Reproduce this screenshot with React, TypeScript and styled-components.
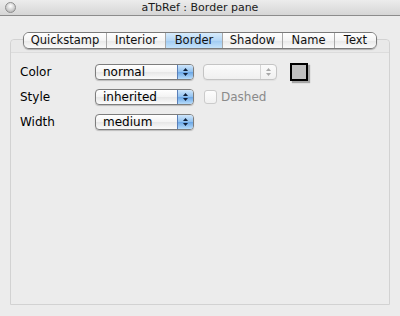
import styled, { createGlobalStyle } from 'styled-components';

const GlobalStyle = createGlobalStyle`
  html, body {
    margin: 0;
    padding: 0;
    background: #ececec;
  }
  body {
    font-family: "Lucida Grande", "DejaVu Sans", sans-serif;
    font-size: 12px;
    color: #000;
  }
`;

const Window = styled.div`
  width: 400px;
  height: 316px;
  display: flex;
  flex-direction: column;
  background: #ececec;
  overflow: hidden;
`;

const TitleBar = styled.div`
  height: 15px;
  flex: none;
  display: flex;
  align-items: center;
  position: relative;
  background: linear-gradient(#ececec, #d6d6d6);
  border-bottom: 1px solid #8c8c8c;
`;

const CloseDot = styled.span`
  position: absolute;
  left: 5px;
  top: 2px;
  width: 11px;
  height: 11px;
  border-radius: 50%;
  box-sizing: border-box;
  border: 1px solid #8e8e8e;
  background: radial-gradient(circle at 50% 35%, #ffffff 0%, #d8d8d8 45%, #a8a8a8 100%);
`;

const Title = styled.div`
  flex: 1;
  text-align: center;
  font-size: 11px;
  line-height: 15px;
  color: #1a1a1a;
`;

const Content = styled.div`
  flex: 1;
  display: flex;
  flex-direction: column;
  padding: 16px 10px 11px;
`;

const TabRow = styled.div`
  display: flex;
  align-self: center;
  position: relative;
  z-index: 1;
  height: 17px;
  border: 1px solid #7a7a7a;
  border-radius: 6px;
  box-sizing: border-box;
  overflow: hidden;
  box-shadow: 0 1px 1px rgba(0, 0, 0, 0.25);
`;

const Tab = styled.div<{ $active?: boolean; $w: number }>`
  width: ${(p) => p.$w}px;
  box-sizing: border-box;
  display: flex;
  align-items: center;
  justify-content: center;
  font-size: 11.5px;
  line-height: 15px;
  color: #111;
  white-space: nowrap;
  background: ${(p) =>
    p.$active
      ? 'linear-gradient(#d8ecfc 0%, #b4d6f5 50%, #9fcaf2 51%, #c6e4fb 100%)'
      : 'linear-gradient(#ffffff 0%, #f4f4f4 50%, #e8e8e8 51%, #fafafa 100%)'};
  & + & {
    border-left: 1px solid #a8a8a8;
  }
`;

const Panel = styled.div`
  flex: 1;
  margin-top: -10px;
  border: 1px solid #d2d2d2;
  border-radius: 4px 4px 0 0;
  display: flex;
  flex-direction: column;
`;

const PanelBand = styled.div`
  height: 12px;
  border-bottom: 1px solid #dcdcdc;
  background: #e9e9e9;
  border-radius: 4px 4px 0 0;
`;

const Rows = styled.div`
  display: flex;
  flex-direction: column;
  gap: 9px;
  padding: 11px 9px 0;
`;

const Row = styled.div`
  display: flex;
  align-items: center;
  height: 16px;
`;

const Label = styled.div`
  width: 75px;
  font-size: 12px;
`;

const Popup = styled.div<{ $width: number; $disabled?: boolean; $gap?: number }>`
  width: ${(p) => p.$width}px;
  margin-left: ${(p) => p.$gap ?? 0}px;
  height: 16px;
  box-sizing: border-box;
  display: flex;
  border-radius: 4px;
  border: 1px solid ${(p) => (p.$disabled ? '#c4c4c4' : '#7d7d7d')};
  background: ${(p) =>
    p.$disabled
      ? 'linear-gradient(#fbfbfb, #f0f0f0)'
      : 'linear-gradient(#ffffff 0%, #f3f3f3 50%, #e6e6e6 51%, #fbfbfb 100%)'};
  overflow: hidden;
  box-shadow: 0 1px 1px rgba(0, 0, 0, ${(p) => (p.$disabled ? 0.05 : 0.2)});
`;

const PopupText = styled.div`
  flex: 1;
  padding-left: 7px;
  font-size: 12px;
  line-height: 14px;
`;

const Arrows = styled.div<{ $disabled?: boolean }>`
  width: 15px;
  display: flex;
  align-items: center;
  justify-content: center;
  border-left: 1px solid ${(p) => (p.$disabled ? '#d4d4d4' : '#5a7fb8')};
  background: ${(p) =>
    p.$disabled
      ? 'transparent'
      : 'linear-gradient(#cfe6fb 0%, #8fc0ef 50%, #6aa6e6 51%, #b7dcfb 100%)'};
`;

const Swatch = styled.div`
  width: 18px;
  height: 18px;
  box-sizing: border-box;
  margin-left: 13px;
  border: 2px solid #000;
  background: #c0c0c0;
  box-shadow: 2px 2px 1px rgba(0, 0, 0, 0.3);
`;

const Check = styled.div`
  width: 13px;
  height: 14px;
  box-sizing: border-box;
  margin-left: 10px;
  border: 1px solid #cbcbcb;
  border-radius: 3px;
  background: linear-gradient(#fdfdfd, #f1f1f1);
`;

const CheckLabel = styled.div`
  margin-left: 4px;
  font-size: 12px;
  color: #8a8a8a;
`;

function ArrowGlyph({ disabled }: { disabled?: boolean }) {
  const c = disabled ? '#a8a8a8' : '#10203a';
  return (
    <svg width="7" height="10" viewBox="0 0 7 10">
      <path d="M3.5 1 L6 4 L1 4 Z" fill={c} />
      <path d="M3.5 9 L6 6 L1 6 Z" fill={c} />
    </svg>
  );
}

function Select({
  value,
  width,
  disabled,
  gap,
}: {
  value: string;
  width: number;
  disabled?: boolean;
  gap?: number;
}) {
  return (
    <Popup $width={width} $disabled={disabled} $gap={gap}>
      <PopupText>{value}</PopupText>
      <Arrows $disabled={disabled}>
        <ArrowGlyph disabled={disabled} />
      </Arrows>
    </Popup>
  );
}

const tabs: [string, number][] = [
  ['Quickstamp', 82],
  ['Interior', 59],
  ['Border', 57],
  ['Shadow', 60],
  ['Name', 52],
  ['Text', 42],
];

export default function App() {
  return (
    <>
      <GlobalStyle />
      <Window>
        <TitleBar>
          <CloseDot />
          <Title>aTbRef : Border pane</Title>
        </TitleBar>
        <Content>
          <TabRow>
            {tabs.map(([t, w]) => (
              <Tab key={t} $w={w} $active={t === 'Border'}>
                {t}
              </Tab>
            ))}
          </TabRow>
          <Panel>
            <PanelBand />
            <Rows>
              <Row>
                <Label>Color</Label>
                <Select value="normal" width={99} />
                <Select value="" width={74} disabled gap={9} />
                <Swatch />
              </Row>
              <Row>
                <Label>Style</Label>
                <Select value="inherited" width={99} />
                <Check />
                <CheckLabel>Dashed</CheckLabel>
              </Row>
              <Row>
                <Label>Width</Label>
                <Select value="medium" width={99} />
              </Row>
            </Rows>
          </Panel>
        </Content>
      </Window>
    </>
  );
}
